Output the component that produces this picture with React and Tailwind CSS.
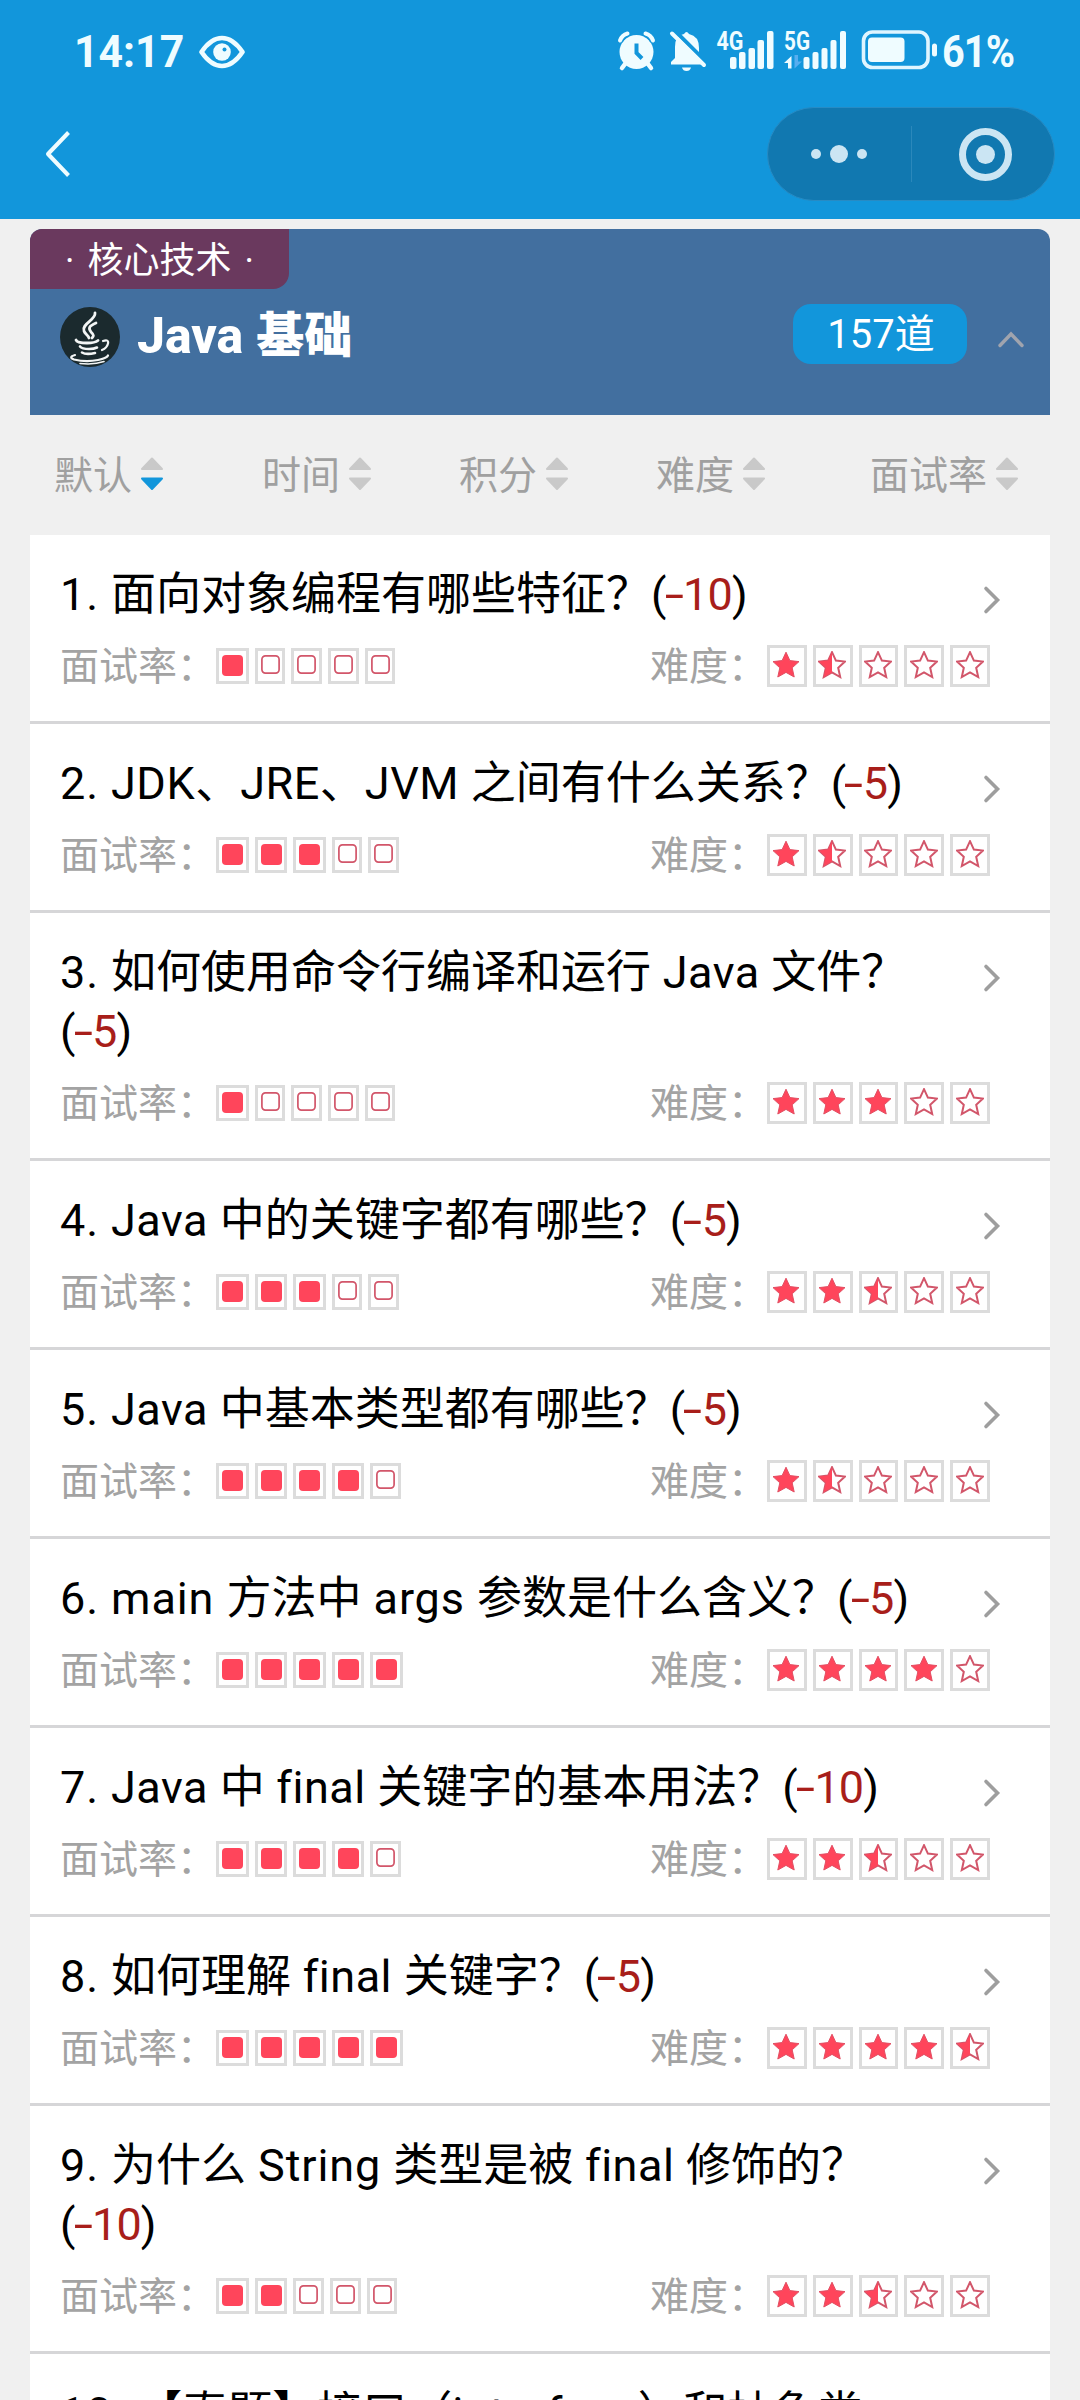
const FONT = "font-['Roboto','Noto_Sans_CJK_SC',sans-serif]";

const QUESTIONS = [
  { n: 1, title: "面向对象编程有哪些特征？", cost: "10", rate: 1, stars: 1.5 },
  { n: 2, title: "JDK、JRE、JVM 之间有什么关系？", cost: "5", rate: 3, stars: 1.5 },
  { n: 3, title: "如何使用命令行编译和运行 Java 文件？", cost: "5", rate: 1, stars: 3 },
  { n: 4, title: "Java 中的关键字都有哪些？", cost: "5", rate: 3, stars: 2.5 },
  { n: 5, title: "Java 中基本类型都有哪些？", cost: "5", rate: 4, stars: 1.5 },
  { n: 6, title: "main 方法中 args 参数是什么含义？", cost: "5", rate: 5, stars: 4 },
  { n: 7, title: "Java 中 final 关键字的基本用法？", cost: "10", rate: 4, stars: 2.5 },
  { n: 8, title: "如何理解 final 关键字？", cost: "5", rate: 5, stars: 4.5 },
  { n: 9, title: "为什么 String 类型是被 final 修饰的？", cost: "10", rate: 2, stars: 2.5 },
  { n: 10, title: "【真题】接口（interface）和抽象类", cost: "5", rate: 5, stars: 3 },
];

const STAR = "M14 1.2 L17.9 9.6 L27 10.6 L20.2 16.8 L22.2 26 L14 21.4 L5.8 26 L7.8 16.8 L1 10.6 L10.1 9.6 Z";

/* Latin runs are tracked slightly wider than the Chinese text around them. */
function Mixed({ text }) {
  return text.split(/([A-Za-z0-9. ]+)/).map((part, i) =>
    i % 2 ? (
      <span key={i} className={/final|Java|J[DRV]/.test(part) ? "tracking-[0.5px]" : "tracking-[0.9px]"}>{part}</span>
    ) : (
      <span key={i}>{part}</span>
    )
  );
}

function Star({ fill }) {
  return (
    <span className="flex h-[42px] w-[39.8px] justify-center border-[3px] border-[#dcdcdc] pt-[3px]">
      <svg width="28" height="28" viewBox="0 0 28 28" className="-ml-px shrink-0">
        {fill === 1 && <path d={STAR} fill="#ff455b" stroke="#e24f63" strokeWidth="1" />}
        {fill < 1 && <path d={STAR} fill="none" stroke="#d2566a" strokeWidth="2" />}
        {fill === 0.5 && <path d="M14 1.2 L14 21.4 L5.8 26 L7.8 16.8 L1 10.6 L10.1 9.6 Z" fill="#ff455b" />}
      </svg>
    </span>
  );
}

function RateBox({ on }) {
  return on ? (
    <span className="h-9 w-[32.6px] border-[3px] border-[#dcdcdc] pt-1 pl-[3px]">
      <span className="block size-[21px] rounded-[4px] bg-[#ff455b]" />
    </span>
  ) : (
    <span className="h-9 w-[30.7px] border-[3px] border-[#dcdcdc] pt-1 pl-[3px]">
      <svg width="19" height="19" viewBox="0 0 19 19" className="block">
        <rect x="0.900" y="0.900" width="17.200" height="17.200" rx="3.500" fill="none" stroke="#d2566a" strokeWidth="1.700" />
      </svg>
    </span>
  );
}

function Question({ q }) {
  return (
    <li className="shrink-0 border-b-[3px] border-[#d6d6d8] bg-white pt-[30px] pb-[33px]">
      <div className="flex items-start pl-[30px]">
        <h2 className="w-[870px] text-[45px] leading-[59px] text-black">
          <Mixed text={`${q.n}. `} />
          <Mixed text={q.title} />
          <span className="whitespace-nowrap tracking-[-0.9px]">
            (
            <span className="text-[#a81e1a]">
              <span className="mr-[4px] ml-[2px] inline-block scale-x-[1.55]">-</span>
              {q.cost}
            </span>
            )
          </span>
        </h2>
        <svg width="18" height="30" viewBox="0 0 18 30" className="mt-[20px] ml-[53px] shrink-0" fill="none" stroke="#9e9e9e" strokeWidth="3.600" strokeLinecap="round">
          <path d="M3 3.500 L14.500 15 L3 26.500" />
        </svg>
      </div>
      <div className="mt-[20px] flex h-[44px] items-center justify-between pr-[60px] pl-[30px] text-[39px] leading-[44px] text-[#a3a3a3]">
        <div className="flex items-center">
          <span className="pt-[2px]">面试率：</span>
          <span className="flex gap-[6px]">
            {[1, 2, 3, 4, 5].map((i) => <RateBox key={i} on={i <= q.rate} />)}
          </span>
        </div>
        <div className="flex items-center">
          <span className="pt-[2px]">难度：</span>
          <span className="flex gap-[6px]">
            {[0, 1, 2, 3, 4].map((i) => <Star key={i} fill={Math.max(0, Math.min(1, q.stars - i))} />)}
          </span>
        </div>
      </div>
    </li>
  );
}

function SortTab({ label, active, className }) {
  return (
    <div className={`flex items-center gap-[8px] ${className}`}>
      <span className="pt-[3px]">{label}</span>
      <svg width="24" height="36" viewBox="0 0 24 36" strokeLinejoin="round" strokeWidth="2">
        <path d="M12 1.500 L22 12 H2 Z" fill="#c9c9c9" stroke="#c9c9c9" />
        <path d="M12 32 L22 21.500 H2 Z" fill={active ? "#1296db" : "#c9c9c9"} stroke={active ? "#1296db" : "#c9c9c9"} />
      </svg>
    </div>
  );
}

function StatusIcons() {
  return (
    <svg width="320" height="44" viewBox="0 0 320 44" fill="#effcff" className="shrink-0 overflow-visible">
      {/* alarm clock */}
      <g stroke="#effcff" strokeLinecap="round">
        <circle cx="18.500" cy="22" r="17" stroke="none" />
        <path d="M7 34 L4 38 M30 34 L33 38" strokeWidth="4.500" />
        <path d="M18.500 13.500 V23 L24 28.500" fill="none" stroke="#1296db" strokeWidth="4" strokeLinecap="butt" />
        <path d="M1.500 11.500 Q3.500 5 10 3.500 M27 3.500 Q33.500 5 35.500 11.500" fill="none" stroke="#1296db" strokeWidth="7" strokeLinecap="butt" />
        <path d="M2 10.500 Q4 5 9.500 3.500 M27.500 3.500 Q33 5 35 10.500" fill="none" strokeWidth="4" />
      </g>
      {/* muted bell */}
      <path d="M53 34.500 V32 L57 28 V17 Q57 5 66 4 Q68.500 0 71 4 Q81 6 81 18 V27 L86 34.500 Z" />
      <path d="M64 37.500 H73 Q72 41 68.500 41 Q65 41 64 37.500 Z" />
      <path d="M56 0 L91 35" stroke="#1296db" strokeWidth="4" />
      <path d="M54 3.500 L86 35" stroke="#effcff" strokeWidth="4" strokeLinecap="round" />
      {/* mobile signals */}
      <text x="98.500" y="20" fontSize="26" fontWeight="700" fontFamily="Roboto" textLength="27" lengthAdjust="spacingAndGlyphs">4G</text>
      <rect x="112" y="27" width="6.500" height="12" rx="2" />
      <rect x="121" y="22" width="6.500" height="17" rx="2" />
      <rect x="130.500" y="18" width="6.500" height="21" rx="2" />
      <rect x="139.500" y="10" width="6.500" height="29" rx="2" />
      <rect x="149" y="1" width="6.500" height="38" rx="2" />
      <text x="166" y="20" fontSize="26" fontWeight="700" fontFamily="Roboto" textLength="26" lengthAdjust="spacingAndGlyphs">5G</text>
      <path d="M173.500 38.500 H170 V33 H166 L173.500 26 Z" />
      <path d="M176.500 25 V38.500 L184 31.500 H180 V25 Z" fill="#57aef0" />
      <rect x="185.500" y="27" width="6" height="12" rx="2" />
      <rect x="194.500" y="22" width="6" height="17" rx="2" />
      <rect x="203.500" y="18" width="6" height="21" rx="2" />
      <rect x="212.500" y="10" width="6" height="29" rx="2" />
      <rect x="222" y="1" width="6" height="38" rx="2" />
      {/* battery */}
      <rect x="245.500" y="2" width="64.500" height="35.500" rx="9" fill="none" stroke="#dff5ff" strokeWidth="3.600" />
      <rect x="250" y="7.500" width="36.500" height="24.500" rx="4" />
      <rect x="314" y="13.500" width="5" height="13" rx="2.500" />
    </svg>
  );
}

export default function App() {
  return (
    <div className={`flex h-[2400px] w-[1080px] flex-col overflow-hidden bg-[#f0f0f0] ${FONT}`}>
      <header className="h-[219px] shrink-0 bg-[#1296db] text-[#effcff]">
        <div className="flex h-[104px] items-center pl-[74px] text-[45px] font-bold">
          <span className="w-[125px] shrink-0 pb-[2px] leading-none">
            <span className="inline-block origin-left scale-x-[0.95]">14:17</span>
          </span>
          <svg width="46" height="34" viewBox="0 0 46 34" className="shrink-0">
            <path d="M2.500 17 Q12 3 23 3 Q34 3 43.500 17 Q34 31 23 31 Q12 31 2.500 17 Z" fill="none" stroke="currentColor" strokeWidth="4.600" strokeLinejoin="round" />
            <circle cx="23" cy="17" r="8.800" fill="currentColor" />
            <circle cx="25.500" cy="14.500" r="2" fill="#1296db" />
          </svg>
          <div className="ml-[373px] flex items-center">
            <StatusIcons />
            <span className="ml-[4px] inline-block origin-left scale-x-[0.88] pb-[2px] leading-none tracking-[-1px]">61%</span>
          </div>
        </div>
        <div className="flex items-center justify-between pt-[3px] pr-[25px] pl-[42px]">
          <svg width="30" height="50" viewBox="0 0 30 50" fill="none" stroke="currentColor" strokeWidth="4" strokeLinejoin="round">
            <path d="M26.500 3.500 L6 25 L26.500 46.500" />
          </svg>
          <div className="flex h-[94px] w-[288px] items-center rounded-full border border-[#278bc4] bg-[#1178b0]">
            <div className="flex w-[143px] items-center justify-center gap-[9px] pr-[2px] text-[#cbe5f3]">
              <i className="size-[10px] rounded-full bg-current" />
              <i className="size-[18px] rounded-full bg-current" />
              <i className="size-[10px] rounded-full bg-current" />
            </div>
            <div className="h-14 w-px bg-[#2b88bb]" />
            <div className="ml-[47px] flex size-[53px] items-center justify-center rounded-full border-[7px] border-[#cbe5f3]">
              <i className="size-[19px] rounded-full bg-[#cbe5f3]" />
            </div>
          </div>
        </div>
      </header>

      <main className="mx-[30px] mt-[10px] flex flex-col">
        <section className="h-[186px] shrink-0 overflow-hidden rounded-t-[12px] bg-[#426f9f] text-white">
          <div className="flex h-[60px] w-[259px] items-center justify-center gap-[13px] rounded-br-[16px] bg-[#6a395e] pt-[3px] text-[36px] leading-none">
            <span>·</span>
            <span>核心技术</span>
            <span>·</span>
          </div>
          <div className="flex h-[90px] items-center pl-[30px]">
            <svg width="60" height="60" viewBox="0 0 60 60" className="mt-[5px]" fill="none" stroke="#f3f5f5" strokeLinecap="round">
              <circle cx="30" cy="30" r="30" fill="#1b2a2e" stroke="none" />
              <path d="M35 6 C36 13 21 17 24 24 C25 27 28 28 29 31" strokeWidth="2.800" />
              <path d="M36 16 C29 19 28 21 31 25 C34 28 34 29 32 31" strokeWidth="2.800" />
              <path d="M16 33 Q17 36 27 36 Q35 36 38 33.500" strokeWidth="2.800" />
              <path d="M20 39.500 Q22 42 29 42 Q34 42 37 40.500" strokeWidth="2.600" />
              <path d="M22 45.500 Q26 48 35 46" strokeWidth="2.600" />
              <path d="M43 34 Q49 32 48 36.500 Q47 41 42 43" strokeWidth="2.200" />
              <path d="M15 48 Q8 50 14 52.500 Q26 55.500 38 53 Q47 51 48 48.500" strokeWidth="2.200" />
              <path d="M20 56.500 Q34 58 44 54.500" strokeWidth="1.600" />
            </svg>
            <h1 className="mt-[4px] ml-[17px] flex items-center text-[48px] leading-[60px] font-extrabold">
              <span className="mr-[13px] text-[50px]">Java</span>
              <span>基础</span>
            </h1>
            <span className="ml-auto flex h-[60px] w-[174px] items-center justify-center rounded-[18px] bg-[#1296db] pt-[2px] pl-[2px] text-[40px] leading-none">157道</span>
            <svg width="28" height="20" viewBox="0 0 28 20" className="mt-[11px] mr-[25px] ml-[30px]" fill="none" stroke="#a0a4ae" strokeWidth="3.400" strokeLinecap="round">
              <path d="M3 15.500 L14 4 L25 15.500" />
            </svg>
          </div>
        </section>

        <nav className="flex h-[120px] shrink-0 items-center pl-[24px] text-[39px] leading-none text-[#a0a0a0]">
          <SortTab label="默认" active className="" />
          <SortTab label="时间" className="ml-[98px]" />
          <SortTab label="积分" className="ml-[87px]" />
          <SortTab label="难度" className="ml-[87px]" />
          <SortTab label="面试率" className="ml-[104px]" />
        </nav>

        <ul className="flex flex-col">
          {QUESTIONS.map((q) => <Question key={q.n} q={q} />)}
        </ul>
      </main>
    </div>
  );
}
